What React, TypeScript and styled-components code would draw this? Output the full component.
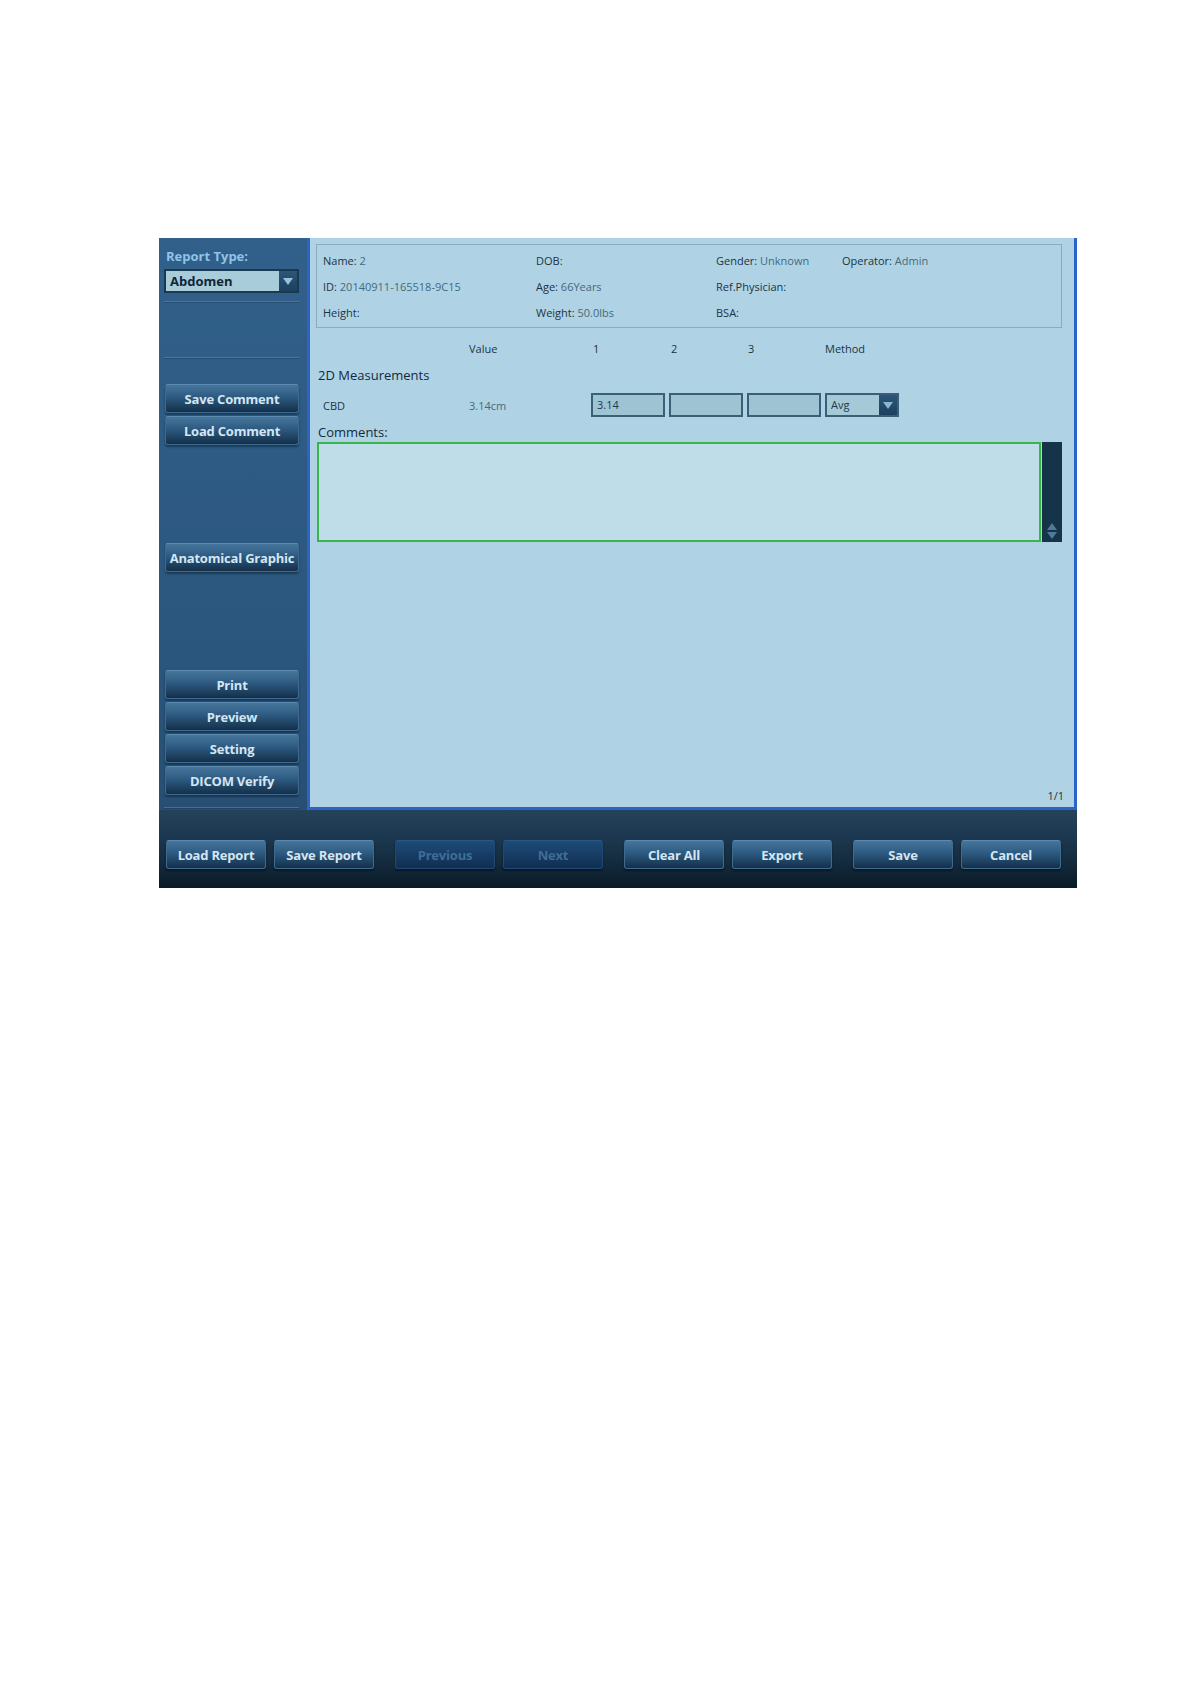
import React from 'react';
import styled, { createGlobalStyle } from 'styled-components';

const GlobalStyle = createGlobalStyle`
  html, body {
    margin: 0;
    padding: 0;
    background: #ffffff;
    font-family: "Open Sans", "Noto Sans", sans-serif;
  }
`;

const Page = styled.div`
  padding: 238px 0 0 159px;
  width: 1190px;
  height: 1684px;
  box-sizing: border-box;
`;

const Frame = styled.div`
  width: 918px;
  height: 650px;
  display: flex;
  flex-direction: column;
`;

const Main = styled.div`
  display: flex;
  flex-direction: row;
  height: 572px;
`;

const Sidebar = styled.div`
  width: 148px;
  display: flex;
  flex-direction: column;
  padding: 0 8px 0 5px;
  box-sizing: border-box;
  background: linear-gradient(180deg, #31608a 0%, #2c5880 60%, #284f73 100%);
`;

const SideLabel = styled.div`
  margin-top: 8px;
  height: 20px;
  line-height: 20px;
  font-size: 13px;
  font-weight: 700;
  color: #8fc4e8;
  padding-left: 2px;
`;

const Select = styled.div<{ $width: number; $bold?: boolean }>`
  width: ${(p) => p.$width}px;
  height: 24px;
  box-sizing: border-box;
  display: flex;
  border: 2px solid ${(p) => (p.$bold ? '#1a3a52' : '#3a6078')};
  background: ${(p) => (p.$bold ? '#a9ccda' : '#a6c9d8')};
  .label {
    flex: 1;
    padding-left: 4px;
    line-height: 20px;
    font-size: ${(p) => (p.$bold ? 13 : 11)}px;
    font-weight: ${(p) => (p.$bold ? 700 : 400)};
    color: ${(p) => (p.$bold ? '#0f2636' : '#1e3a4c')};
  }
  .arrow {
    width: 18px;
    background: linear-gradient(180deg, #2c5678, #1c4060);
    display: flex;
    align-items: center;
    justify-content: center;
  }
`;

const Separator = styled.div<{ $top: number }>`
  margin-top: ${(p) => p.$top}px;
  height: 1px;
  background: rgba(120, 170, 205, 0.35);
  box-shadow: 0 1px 0 rgba(10, 30, 50, 0.25);
`;

const SideButton = styled.button<{ $top: number }>`
  margin: ${(p) => p.$top}px 0 0 1px;
  width: 134px;
  height: 29px;
  flex: none;
  border: 1px solid #3c6a90;
  border-top-color: #5d8cb2;
  border-radius: 3px;
  background: linear-gradient(180deg, #46759c 0%, #2d5a80 45%, #1c3f5e 80%, #152f48 100%);
  box-shadow: 0 2px 2px rgba(5, 20, 35, 0.45);
  color: #d4e6f3;
  font-family: "Open Sans", "Noto Sans", sans-serif;
  font-size: 13px;
  font-weight: 700;
  letter-spacing: -0.2px;
  padding: 0;
  white-space: nowrap;
  cursor: pointer;
`;

const Content = styled.div`
  flex: 1;
  display: flex;
  flex-direction: column;
  background: #afd3e5;
  border: 3px solid #2c63c6;
  border-top: none;
  padding: 6px 12px 0 6px;
  color: #1b3344;
`;

const InfoBox = styled.div`
  height: 84px;
  box-sizing: border-box;
  border: 1px solid #88adc0;
  padding: 2px 6px;
  display: grid;
  grid-template-columns: 213px 180px 126px 1fr;
  grid-auto-rows: 26px;
  align-items: center;
`;

const Field = styled.div`
  font-size: 11px;
  color: #1b3344;
  white-space: nowrap;
  span {
    color: #44697c;
  }
`;

const Row = styled.div<{ $top: number; $height?: number }>`
  display: flex;
  align-items: center;
  margin-top: ${(p) => p.$top}px;
  height: ${(p) => p.$height ?? 24}px;
`;

const Cell = styled.div<{ $width: number; $pad?: number; $muted?: boolean }>`
  width: ${(p) => p.$width}px;
  flex: none;
  padding-left: ${(p) => p.$pad ?? 0}px;
  box-sizing: border-box;
  font-size: 11px;
  color: ${(p) => (p.$muted ? '#44697c' : '#1b3344')};
  white-space: nowrap;
`;

const Heading = styled.div`
  padding-left: 2px;
  font-size: 13px;
  color: #14293a;
`;

const Input = styled.div`
  width: 74px;
  height: 24px;
  box-sizing: border-box;
  margin-right: 4px;
  border: 2px solid #3a6078;
  background: #9ec3d3;
  font-size: 11px;
  line-height: 20px;
  padding-left: 4px;
  color: #1e3a4c;
`;

const CommentRow = styled.div`
  display: flex;
  gap: 1px;
  margin-left: 1px;
  height: 100px;
`;

const CommentBox = styled.div`
  width: 724px;
  box-sizing: border-box;
  border: 2px solid #39b64a;
  background: #bfdde8;
`;

const ScrollBar = styled.div`
  width: 20px;
  background: #15344a;
  display: flex;
  flex-direction: column;
  justify-content: flex-end;
  align-items: center;
  padding-bottom: 3px;
  box-sizing: border-box;
`;

const PageNum = styled.div`
  margin-top: auto;
  align-self: flex-end;
  margin-right: -2px;
  padding-bottom: 4px;
  line-height: 14px;
  font-size: 11px;
  color: #1b3344;
`;

const BottomBar = styled.div`
  height: 78px;
  box-sizing: border-box;
  padding: 30px 0 0 7px;
  display: flex;
  align-items: flex-start;
  gap: 8px;
  background: linear-gradient(180deg, #24425a 0%, #1c3850 35%, #132a3c 70%, #0a1a26 100%);
`;

const BarButton = styled.button<{ $group?: boolean; $disabled?: boolean }>`
  width: 100px;
  height: 29px;
  margin-left: ${(p) => (p.$group ? 13 : 0)}px;
  border: 1px solid ${(p) => (p.$disabled ? '#1f4a74' : '#3e6b90')};
  border-top-color: ${(p) => (p.$disabled ? '#2a5886' : '#5c8ab0')};
  border-radius: 3px;
  background: ${(p) =>
    p.$disabled
      ? 'linear-gradient(180deg, #1f4b78 0%, #173d66 50%, #102e50 100%)'
      : 'linear-gradient(180deg, #46759c 0%, #2d5a80 45%, #1c3f5e 80%, #152f48 100%)'};
  box-shadow: 0 2px 2px rgba(0, 10, 20, 0.5);
  color: ${(p) => (p.$disabled ? '#3f6d97' : '#d4e6f3')};
  font-family: "Open Sans", "Noto Sans", sans-serif;
  font-size: 13px;
  font-weight: 700;
  letter-spacing: -0.2px;
  padding: 0;
  white-space: nowrap;
  cursor: pointer;
`;

const Arrow = ({ up = false, color }: { up?: boolean; color: string }) => (
  <svg width="10" height="7" viewBox="0 0 10 7">
    <path d={up ? 'M5 0 L10 7 L0 7 Z' : 'M0 0 L10 0 L5 7 Z'} fill={color} />
  </svg>
);

const info: [string, string][] = [
  ['Name:', '2'], ['DOB:', ''], ['Gender:', 'Unknown'], ['Operator:', 'Admin'],
  ['ID:', '20140911-165518-9C15'], ['Age:', '66Years'], ['Ref.Physician:', ''], ['', ''],
  ['Height:', ''], ['Weight:', '50.0lbs'], ['BSA:', ''], ['', ''],
];

const bottomButtons = [
  { label: 'Load Report' },
  { label: 'Save Report' },
  { label: 'Previous', group: true, disabled: true },
  { label: 'Next', disabled: true },
  { label: 'Clear All', group: true },
  { label: 'Export' },
  { label: 'Save', group: true },
  { label: 'Cancel' },
];

export default function App() {
  return (
    <Page>
      <GlobalStyle />
      <Frame>
        <Main>
          <Sidebar>
            <SideLabel>Report Type:</SideLabel>
            <Select $width={135} $bold style={{ marginTop: 3 }}>
              <div className='label'>Abdomen</div>
              <div className='arrow'><Arrow color='#9cc2da' /></div>
            </Select>
            <Separator $top={8} />
            <Separator $top={55} />
            <SideButton $top={26}>Save Comment</SideButton>
            <SideButton $top={3}>Load Comment</SideButton>
            <SideButton $top={98}>Anatomical Graphic</SideButton>
            <SideButton $top={98}>Print</SideButton>
            <SideButton $top={3}>Preview</SideButton>
            <SideButton $top={3}>Setting</SideButton>
            <SideButton $top={3}>DICOM Verify</SideButton>
            <Separator $top={12} />
          </Sidebar>
          <Content>
            <InfoBox>
              {info.map(([label, value], i) => (
                <Field key={i}>{label} <span>{value}</span></Field>
              ))}
            </InfoBox>
            <Row $top={8}>
              <Cell $width={153} />
              <Cell $width={122}>Value</Cell>
              <Cell $width={78} $pad={2}>1</Cell>
              <Cell $width={78} $pad={2}>2</Cell>
              <Cell $width={77} $pad={1}>3</Cell>
              <Cell $width={80} $pad={1}>Method</Cell>
            </Row>
            <Row $top={3}>
              <Heading>2D Measurements</Heading>
            </Row>
            <Row $top={6}>
              <Cell $width={153} $pad={7}>CBD</Cell>
              <Cell $width={122} $muted>3.14cm</Cell>
              <Input>3.14</Input>
              <Input />
              <Input />
              <Select $width={74}>
                <div className='label'>Avg</div>
                <div className='arrow'><Arrow color='#8ab4d0' /></div>
              </Select>
            </Row>
            <Row $top={5} $height={20}>
              <Heading>Comments:</Heading>
            </Row>
            <CommentRow>
              <CommentBox />
              <ScrollBar>
                <Arrow up color='#4f7a96' />
                <div style={{ height: 2 }} />
                <Arrow color='#4f7a96' />
              </ScrollBar>
            </CommentRow>
            <PageNum>1/1</PageNum>
          </Content>
        </Main>
        <BottomBar>
          {bottomButtons.map((b) => (
            <BarButton key={b.label} $group={b.group} $disabled={b.disabled}>{b.label}</BarButton>
          ))}
        </BottomBar>
      </Frame>
    </Page>
  );
}
